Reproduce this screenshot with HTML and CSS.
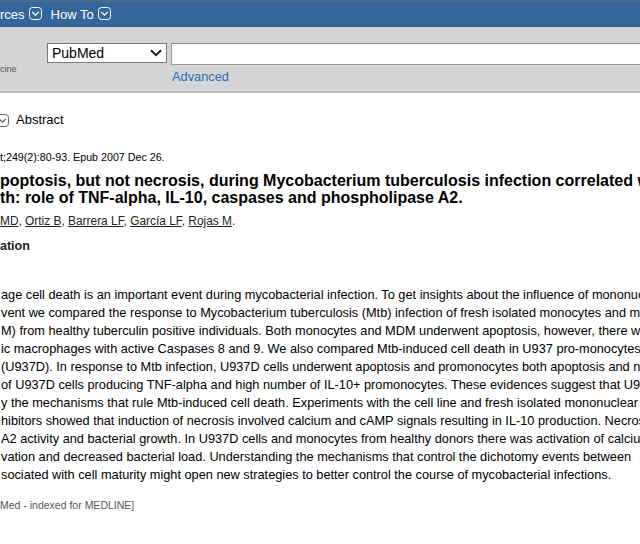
FILE: index.html
```html
<!DOCTYPE html>
<html lang="en">
<head>
<meta charset="utf-8">
<title>PubMed Abstract</title>
<link rel="stylesheet" href="styles.css">
</head>
<body>
<header class="topbar">
  <span class="nav-item">rces</span>
  <svg class="nav-icon" width="13" height="13" viewBox="0 0 13 13"><rect x="0.5" y="0.5" width="12" height="12" rx="3" ry="3" fill="none" stroke="#ffffff" stroke-width="1"/><path d="M3.3 5 L6.5 8.2 L9.7 5" fill="none" stroke="#ffffff" stroke-width="1.2"/></svg>
  <span class="nav-item nav-gap">How To</span>
  <svg class="nav-icon" width="13" height="13" viewBox="0 0 13 13"><rect x="0.5" y="0.5" width="12" height="12" rx="3" ry="3" fill="none" stroke="#ffffff" stroke-width="1"/><path d="M3.3 5 L6.5 8.2 L9.7 5" fill="none" stroke="#ffffff" stroke-width="1.2"/></svg>
</header>
<div class="searchbar">
  <div class="logo"><span class="logo-text">cine</span></div>
  <div class="db-select">
    <span class="db-name">PubMed</span>
    <svg class="db-chevron" width="12" height="8" viewBox="0 0 12 8"><path d="M1 1.2 L6 6.2 L11 1.2" fill="none" stroke="#222" stroke-width="2"/></svg>
  </div>
  <div class="search-col">
    <div class="search-input"></div>
    <a class="advanced" href="#">Advanced</a>
  </div>
</div>
<main class="content">
  <div class="display-bar">
    <svg class="disp-icon" width="13" height="13" viewBox="0 0 13 13"><rect x="0.5" y="0.5" width="12" height="12" rx="3" ry="3" fill="none" stroke="#666" stroke-width="1"/><path d="M3.3 5 L6.5 8.2 L9.7 5" fill="none" stroke="#555" stroke-width="1.1"/></svg>
    <span class="disp-label">Abstract</span>
  </div>
  <div class="cit">t;249(2):80-93. Epub 2007 Dec 26.</div>
  <h1 class="title">
    <span class="tline">poptosis, but not necrosis, during Mycobacterium tuberculosis infection correlated with</span>
    <span class="tline">th: role of TNF-alpha, IL-10, caspases and phospholipase A2.</span>
  </h1>
  <div class="auths"><a href="#">MD</a>, <a href="#">Ortiz B</a>, <a href="#">Barrera LF</a>, <a href="#">García LF</a>, <a href="#">Rojas M</a>.</div>
  <h3 class="affl">ation</h3>
  <div class="abstract">
    <div class="aline">age cell death is an important event during mycobacterial infection. To get insights about the influence of mononuclear</div>
    <div class="aline">vent we compared the response to Mycobacterium tuberculosis (Mtb) infection of fresh isolated monocytes and monocyte</div>
    <div class="aline">M) from healthy tuberculin positive individuals. Both monocytes and MDM underwent apoptosis, however, there was</div>
    <div class="aline">ic macrophages with active Caspases 8 and 9. We also compared Mtb-induced cell death in U937 pro-monocytes</div>
    <div class="aline">(U937D). In response to Mtb infection, U937D cells underwent apoptosis and promonocytes both apoptosis and necrosis</div>
    <div class="aline">of U937D cells producing TNF-alpha and high number of IL-10+ promonocytes. These evidences suggest that U937</div>
    <div class="aline">y the mechanisms that rule Mtb-induced cell death. Experiments with the cell line and fresh isolated mononuclear</div>
    <div class="aline">hibitors showed that induction of necrosis involved calcium and cAMP signals resulting in IL-10 production. Necrosis</div>
    <div class="aline">A2 activity and bacterial growth. In U937D cells and monocytes from healthy donors there was activation of calcium</div>
    <div class="aline">vation and decreased bacterial load. Understanding the mechanisms that control the dichotomy events between</div>
    <div class="aline">sociated with cell maturity might open new strategies to better control the course of mycobacterial infections.</div>
  </div>
  <div class="status">Med - indexed for MEDLINE]</div>
</main>
</body>
</html>
```

FILE: styles.css
```css
html, body {
  margin: 0;
  padding: 0;
  background: #ffffff;
  overflow: hidden;
}
body {
  font-family: "Liberation Sans", Arial, sans-serif;
  color: #000;
  width: 640px;
  height: 544px;
}
.topbar {
  height: 24px;
  padding-top: 3px;
  display: flex;
  align-items: center;
  background: linear-gradient(#4a6a8f 0, #4a6a8f 2px, #33669a 2px, #33669a 24px, #3b5f88 27px);
  border-bottom: 2px solid #c5d2df;
  color: #ffffff;
  font-size: 13px;
}
.nav-item {
  line-height: 24px;
}
.nav-gap {
  margin-left: 9px;
}
.nav-icon {
  margin-left: 4px;
  margin-top: -3px;
  display: block;
}
.searchbar {
  height: 62px;
  background: #d5d5d5;
  border-bottom: 2px solid #bdbdbd;
  display: flex;
  align-items: flex-start;
}
.logo {
  width: 47px;
  height: 45px;
  display: flex;
  align-items: flex-end;
}
.logo-text {
  font-size: 9px;
  color: #555;
  line-height: 10px;
}
.db-select {
  margin-top: 14px;
  height: 18px;
  width: 110px;
  border: 1px solid #7a7a7a;
  background: #ffffff;
  display: flex;
  align-items: center;
  justify-content: space-between;
  padding-left: 4px;
  padding-right: 4px;
}
.db-name {
  font-size: 14px;
  line-height: 18px;
}
.db-chevron {
  display: block;
}
.search-col {
  margin-left: 4px;
  margin-top: 14px;
  flex: 1;
  display: flex;
  flex-direction: column;
  min-width: 0;
}
.search-input {
  height: 20px;
  margin-right: -20px;
  background: #ffffff;
  border: 1px solid #9a9a9a;
  border-top-color: #8a8a8a;
}
.advanced {
  margin-left: 1px;
  margin-top: 4px;
  font-size: 12.8px;
  line-height: 16px;
  color: #2a6ebd;
  text-decoration: none;
}
.display-bar {
  margin-top: 19px;
  height: 16px;
  display: flex;
  align-items: center;
}
.disp-icon {
  display: block;
  margin-left: -4px;
}
.disp-label {
  margin-left: 7px;
  font-size: 13px;
  line-height: 16px;
}
.cit {
  margin-top: 22px;
  font-size: 10.7px;
  line-height: 14px;
  white-space: nowrap;
}
.title {
  margin: 8px 0 0 0;
  font-size: 16px;
  line-height: 17px;
  font-weight: bold;
  white-space: nowrap;
}
.tline {
  display: block;
}
.auths {
  margin-top: 8px;
  font-size: 11.9px;
  line-height: 15px;
  color: #222;
  white-space: nowrap;
}
.auths a {
  color: #222;
  text-decoration: underline;
}
.affl {
  margin: 9px 0 0 0;
  font-size: 12.5px;
  line-height: 16px;
  font-weight: bold;
  color: #222;
}
.abstract {
  margin-top: 32px;
  font-size: 12.75px;
  line-height: 18px;
}
.aline {
  white-space: nowrap;
  padding-left: 1px;
}
.status {
  margin-top: 14px;
  font-size: 10.5px;
  line-height: 14px;
  color: #555;
}
```
